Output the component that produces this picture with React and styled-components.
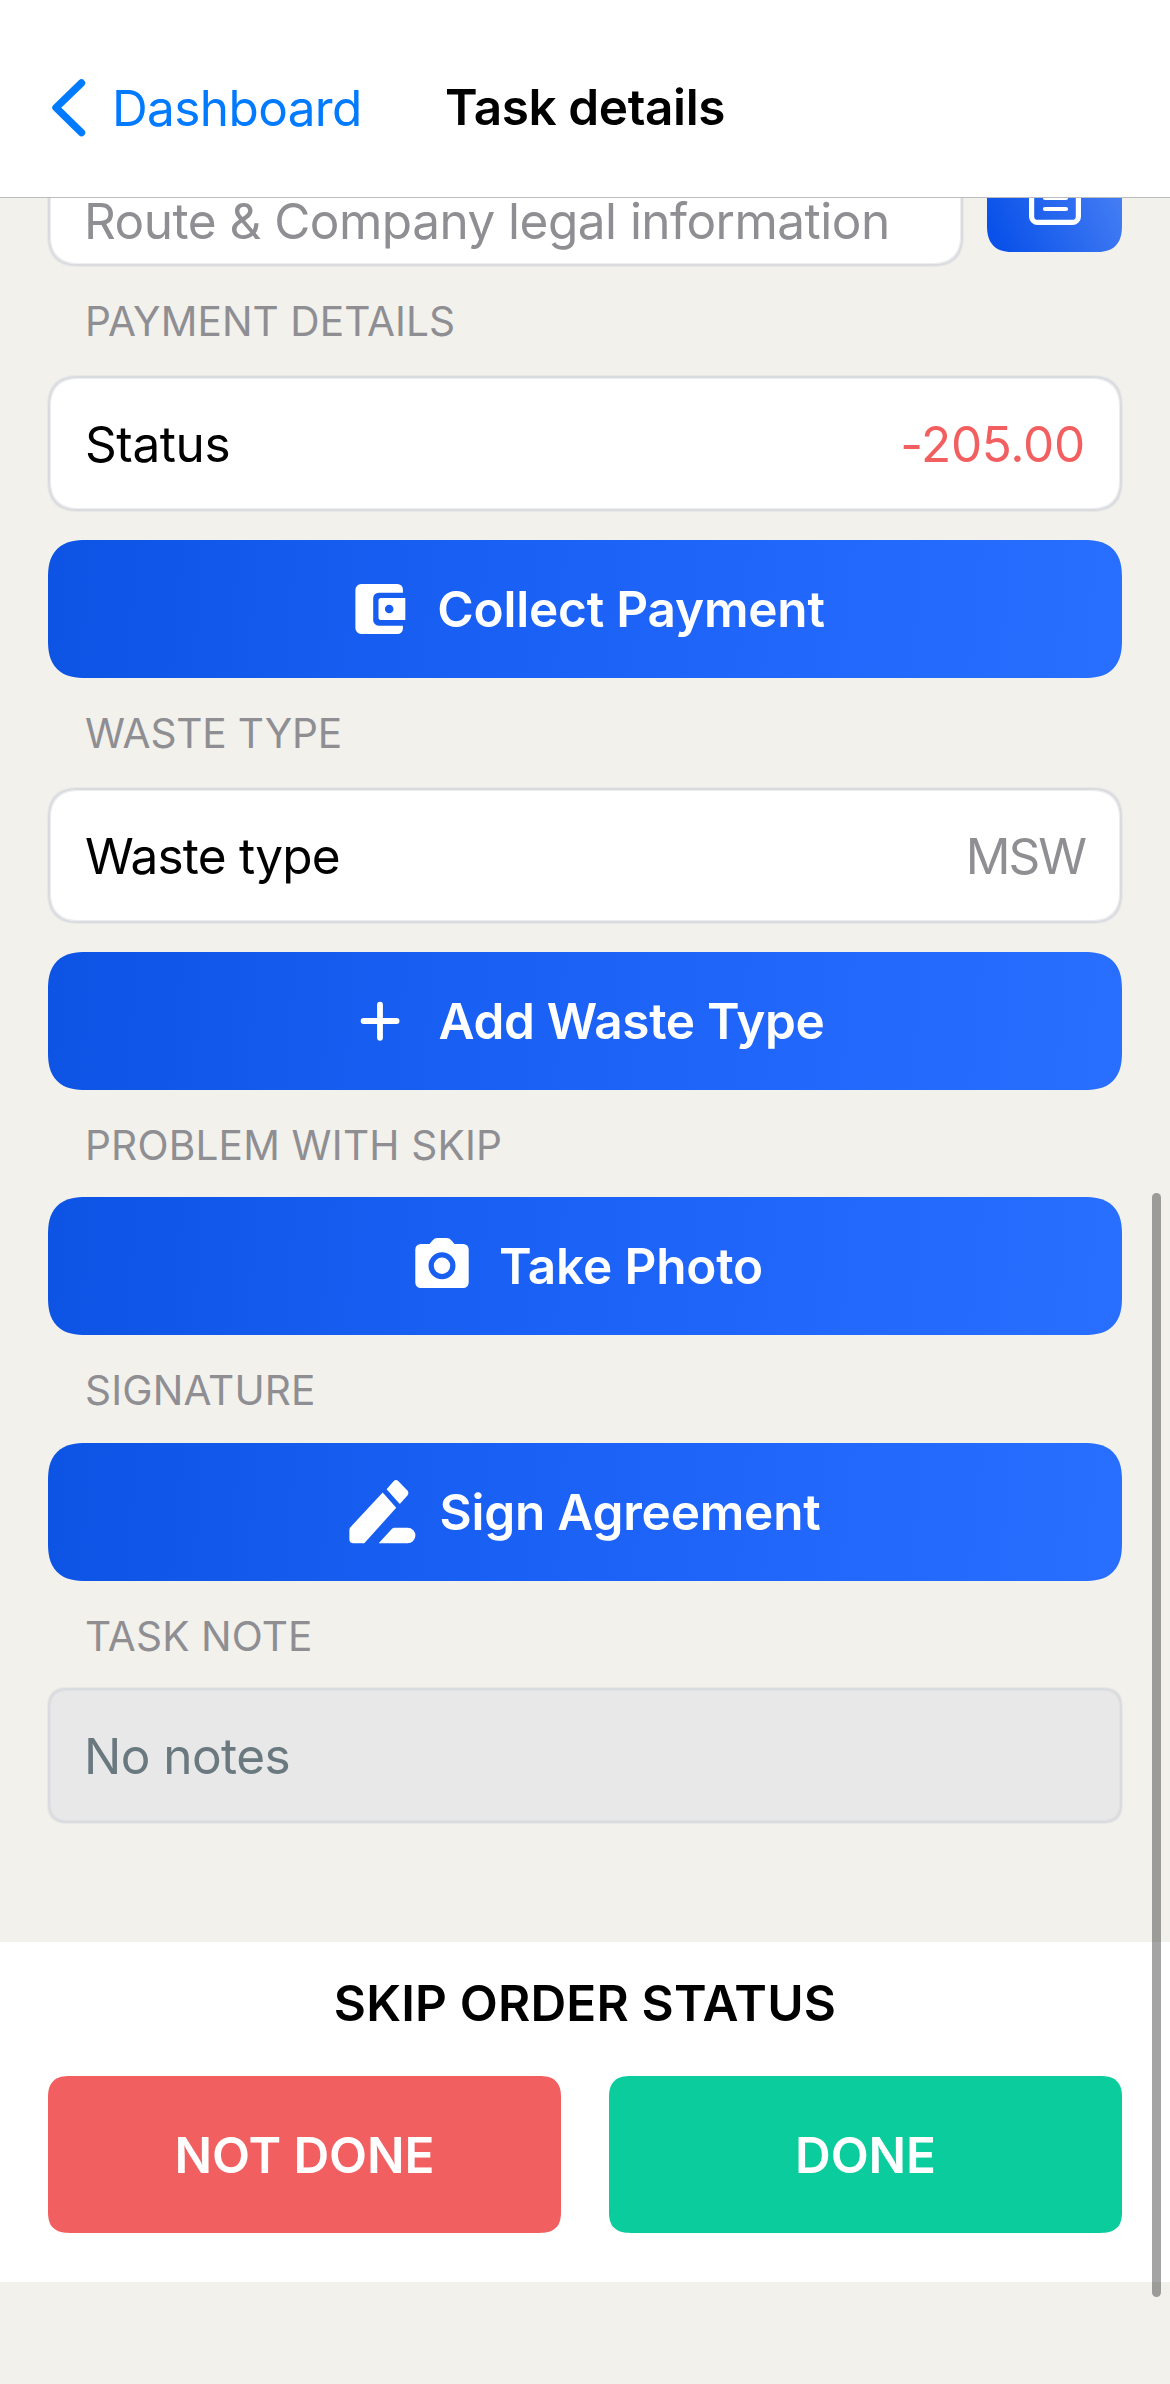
import React from "react";
import styled, { createGlobalStyle, css } from "styled-components";

const GlobalStyle = createGlobalStyle`
  * { box-sizing: border-box; }
  body { margin: 0; background: #f2f1ec; }
  button { border: 0; margin: 0; padding: 0; font: inherit; color: inherit; background: none; }
  svg { display: block; flex: none; }
`;

/* Rounded corners with the softer, continuous iOS curve where it is supported. */
const corners = (radius) => css`
  border-radius: ${radius}px;
  @supports (corner-shape: squircle) {
    border-radius: ${radius * 1.27}px;
    corner-shape: superellipse(1.35);
  }
`;

const Screen = styled.div`
  position: relative;
  display: flex;
  flex-direction: column;
  width: 1170px;
  height: 2384px;
  overflow: hidden;
  background: #f2f1ec;
  color: #000;
  font-family: Inter, "Liberation Sans", sans-serif;
  font-size: 49.5px;
  line-height: 60px;
  white-space: nowrap;
`;

const Header = styled.header`
  flex: none;
  display: grid;
  grid-template-columns: 1fr auto 1fr;
  align-items: center;
  height: 198px;
  padding-top: 18px;
  background: #fff;
  border-bottom: 1px solid #bcbcbe;
`;

const BackButton = styled.button`
  display: flex;
  align-items: center;
  gap: 26px;
  padding-left: 50px;
  color: #007aff;
  letter-spacing: -0.62px;
`;

const Title = styled.h1`
  margin: 0;
  padding-bottom: 2px;
  font-size: inherit;
  font-weight: 600;
  letter-spacing: -0.39px;
`;

const Content = styled.main`
  flex: none;
  display: flex;
  flex-direction: column;
  height: 1744px;
  padding: 0 48px;
  overflow: hidden;
`;

const RouteRow = styled.div`
  flex: none;
  display: flex;
  align-items: flex-start;
  gap: 24px;
  margin-top: -66px;
`;

const cardFrame = css`
  display: flex;
  border: 2px solid #d9dbdf;
  box-shadow: 0 0 0 1px #e8e8e7, inset 0 0 0 1px #ecedef;
`;

const RouteCard = styled.div`
  ${cardFrame}
  ${corners(25)}
  flex: 1;
  align-items: flex-end;
  height: 134px;
  padding: 0 34px 20px;
  background: #fff;
  color: #8e8e93;
  line-height: 46px;
  letter-spacing: -0.52px;
`;

const RouteButton = styled.button`
  ${corners(21)}
  display: flex;
  align-items: center;
  justify-content: center;
  width: 135px;
  height: 120px;
  background: linear-gradient(65deg, #0951e9 8%, #5187f7);
`;

const SectionLabel = styled.h2`
  flex: none;
  height: ${(p) => p.$height || 107}px;
  margin: 0;
  padding: 4px 0 0 37px;
  color: #8e8e93;
  font-size: 40.6px;
  font-weight: 400;
  line-height: 103px;
  letter-spacing: ${(p) => p.$tracking || 0}px;
`;

const Card = styled.div`
  ${cardFrame}
  ${corners(25)}
  flex: none;
  align-items: center;
  justify-content: space-between;
  height: 135px;
  margin-bottom: 29px;
  padding: 0 35px;
  background: #fff;
`;

const CardLabel = styled.span`
  letter-spacing: ${(p) => p.$tracking}px;
`;

const CardValue = styled.span`
  color: ${(p) => (p.$negative ? "#f25f60" : "#8e8e93")};
  letter-spacing: ${(p) => p.$tracking}px;
`;

const NoteCard = styled.div`
  ${cardFrame}
  ${corners(16)}
  flex: none;
  align-items: center;
  height: 135px;
  padding: 1px 34px 0;
  background: #e8e8e8;
  box-shadow: 0 0 0 1px #e8e8e7, inset 0 0 0 1px #e1e2e4;
  color: #6a797f;
  letter-spacing: -0.56px;
`;

const ActionButton = styled.button`
  ${corners(30)}
  flex: none;
  display: flex;
  align-items: center;
  justify-content: center;
  gap: ${(p) => p.$gap || 20}px;
  height: 138px;
  padding-right: ${(p) => p.$inset || 0}px;
  background: linear-gradient(95deg, #0d54e5 0%, #155cef 27%, #1f65fa 62%, #286fff 100%);
  color: #fff;
  font-weight: 600;
  letter-spacing: ${(p) => p.$tracking}px;
`;

const StatusPanel = styled.footer`
  flex: none;
  height: 340px;
  padding: 0 48px;
  background: #fff;
`;

const StatusTitle = styled.h2`
  height: 134px;
  margin: 0;
  font-size: inherit;
  font-weight: 600;
  line-height: 122px;
  letter-spacing: 0.17px;
  text-align: center;
`;

const StatusActions = styled.div`
  display: grid;
  grid-template-columns: 1fr 1fr;
  gap: 48px;
`;

const StatusButton = styled.button`
  ${corners(17)}
  height: 157px;
  background: ${(p) => p.$color};
  color: #fff;
  font-weight: 600;
  letter-spacing: -0.1px;
`;

const ScrollThumb = styled.div`
  position: absolute;
  top: 1193px;
  right: 9px;
  width: 9px;
  height: 1104px;
  border-radius: 5px;
  background: rgba(0, 0, 0, 0.355);
`;

const ChevronIcon = () => (
  <svg width="36" height="60" viewBox="0 0 36 60" fill="none" stroke="currentColor" strokeWidth="7.4" strokeLinecap="round" strokeLinejoin="round">
    <path d="M31.5 5 6 29.7l25.5 25" />
  </svg>
);

const DocumentIcon = () => (
  <svg width="54" height="66" viewBox="0 0 54 66" fill="none" stroke="#fff" strokeLinecap="round">
    <rect x="3.6" y="2.6" width="46.8" height="60.8" rx="6" strokeWidth="5.2" />
    <path d="M17 28h21M17 39h21M17 50h21" strokeWidth="4.2" />
  </svg>
);

const WalletIcon = () => (
  <svg width="72" height="72" viewBox="0 0 72 72" fill="#fff">
    <path d="M16.2 11h36.2a5.5 5.5 0 0 1 5.5 5.5v3.2H33.7a5.5 5.5 0 0 0-5.5 5.5v22a5.5 5.5 0 0 0 5.5 5.5h24.2v2.8a5.5 5.5 0 0 1-5.5 5.5H16.2a5.8 5.8 0 0 1-5.8-5.8V16.800a5.800 5.800 0 0 1 5.800-5.800Z" />
    <path fillRule="evenodd" d="M36 25h24.300v22H36a2.500 2.500 0 0 1-2.500-2.500v-17A2.500 2.500 0 0 1 36 25Zm8.200 6.700a4.300 4.300 0 1 0 0 8.600 4.300 4.300 0 0 0 0-8.600Z" />
  </svg>
);

const PlusIcon = () => (
  <svg width="72" height="72" viewBox="0 0 72 72" fill="none" stroke="#fff" strokeWidth="5.8" strokeLinecap="round">
    <path d="M36 19.600v33.200M19.600 36h33" />
  </svg>
);

const CameraIcon = () => (
  <svg width="72" height="72" viewBox="0 0 72 72" fill="#fff">
    <path fillRule="evenodd" d="M14.800 14h8.700l3-3.600A6.500 6.500 0 0 1 31.500 8h9a6.500 6.500 0 0 1 5 2.400l3 3.600h8.700a5.500 5.500 0 0 1 5.500 5.500v33a5.500 5.500 0 0 1-5.500 5.500H14.800a5.500 5.500 0 0 1-5.500-5.500v-33a5.500 5.500 0 0 1 5.500-5.500ZM36 22.300a13.500 13.500 0 1 0 0 27 13.500 13.500 0 0 0 0-27Z" />
    <circle cx="36" cy="35.800" r="8.200" />
  </svg>
);

const SignIcon = () => (
  <svg width="72" height="72" viewBox="0 0 72 72" fill="#fff">
    <path d="M35.700 16.500 49.200 31.700 17.300 67.300H6.400a4 4 0 0 1-4-4V53.800q0-1.500 1-2.600Z" />
    <path d="M39.600 13.300 46.800 5q2.200-2 4.400 0L60.400 14.600q2 2.600 0 5L52.800 27.900Z" />
    <path d="M31.700 67.300 45 52.700q1-1 2.400-1H60.600a7.800 7.800 0 0 1 0 15.600Z" />
  </svg>
);

export default function App() {
  return (
    <>
      <GlobalStyle />
      <Screen>
        <Header>
          <BackButton>
            <ChevronIcon />
            Dashboard
          </BackButton>
          <Title>Task details</Title>
        </Header>

        <Content>
          <RouteRow>
            <RouteCard>Route &amp; Company legal information</RouteCard>
            <RouteButton aria-label="Route information">
              <DocumentIcon />
            </RouteButton>
          </RouteRow>

          <SectionLabel $height={110} $tracking={0.08}>PAYMENT DETAILS</SectionLabel>
          <Card>
            <CardLabel $tracking={-0.39}>Status</CardLabel>
            <CardValue $negative $tracking={-0.27}>-205.00</CardValue>
          </Card>
          <ActionButton $tracking={-0.2}>
            <WalletIcon />
            Collect Payment
          </ActionButton>

          <SectionLabel $height={110} $tracking={-0.15}>WASTE TYPE</SectionLabel>
          <Card>
            <CardLabel $tracking={-0.8}>Waste type</CardLabel>
            <CardValue $tracking={-2}>MSW</CardValue>
          </Card>
          <ActionButton $tracking={-0.32} $gap={22} $inset={1}>
            <PlusIcon />
            Add Waste Type
          </ActionButton>

          <SectionLabel $tracking={0.2}>PROBLEM WITH SKIP</SectionLabel>
          <ActionButton $tracking={-0.18} $gap={21} $inset={1}>
            <CameraIcon />
            Take Photo
          </ActionButton>

          <SectionLabel $height={108} $tracking={0.15}>SIGNATURE</SectionLabel>
          <ActionButton $tracking={-0.2} $gap={21} $inset={3}>
            <SignIcon />
            Sign Agreement
          </ActionButton>

          <SectionLabel $tracking={0.12}>TASK NOTE</SectionLabel>
          <NoteCard>No notes</NoteCard>
        </Content>

        <StatusPanel>
          <StatusTitle>SKIP ORDER STATUS</StatusTitle>
          <StatusActions>
            <StatusButton $color="#f25f60">NOT DONE</StatusButton>
            <StatusButton $color="#0acc9c">DONE</StatusButton>
          </StatusActions>
        </StatusPanel>

        <ScrollThumb />
      </Screen>
    </>
  );
}
